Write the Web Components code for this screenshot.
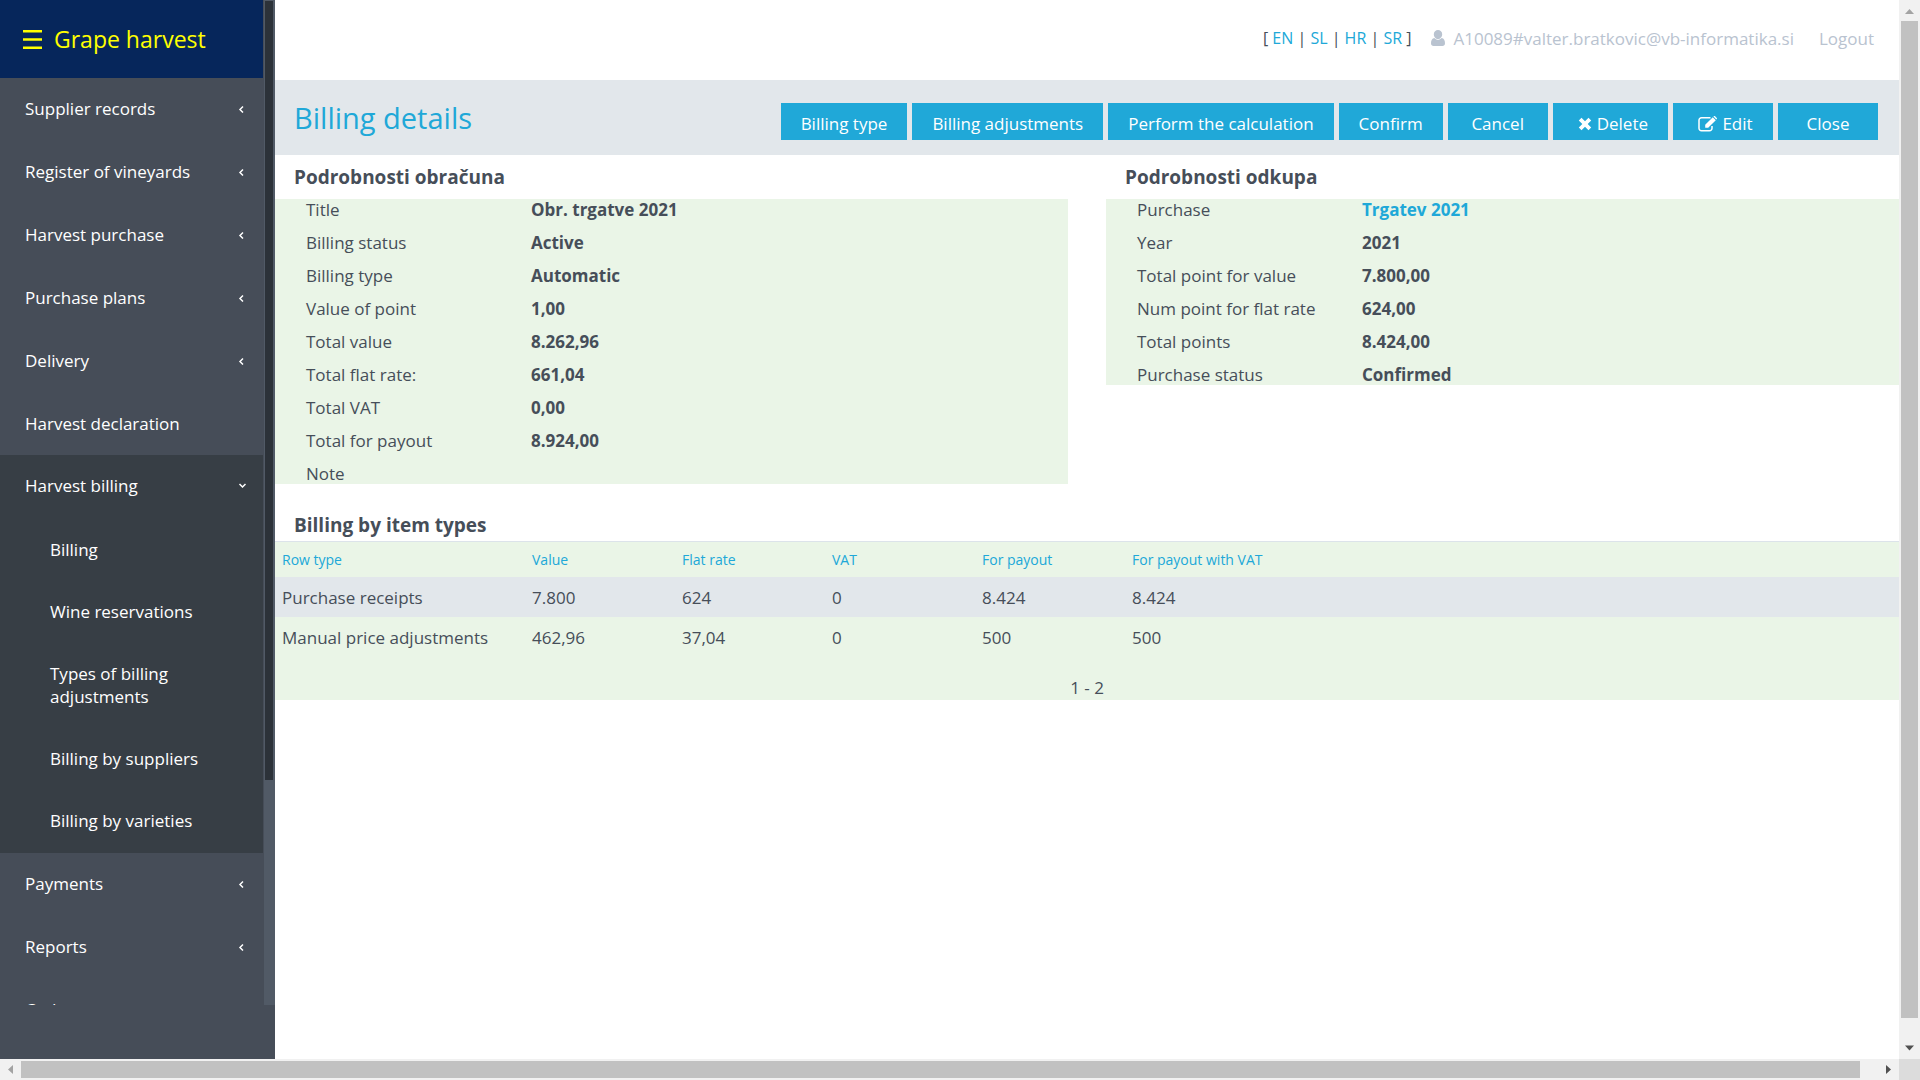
<!DOCTYPE html>
<html lang="en">
<head>
<meta charset="utf-8">
<title>Grape harvest – Billing details</title>
<style>
  html, body { margin: 0; height: 100%; }
  body {
    overflow: hidden;
    --blue: #20a8d8;
    --ink: #464e59;
    --green: #eaf5e7;
    --band: #e2e7eb;
    --muted: #b9c3d0;
    --side: #464d58;
    --side-open: #373e45;
    font-family: "Open Sans", "Segoe UI", "Noto Sans", sans-serif;
    font-size: 17px;
    line-height: 23px;
    color: var(--ink);
    background: #fff;
  }
</style>
</head>
<body>
<app-window>
  <app-sidebar slot="side" brand="Grape harvest">
    <nav-item parent>Supplier records</nav-item>
    <nav-item parent>Register of vineyards</nav-item>
    <nav-item parent>Harvest purchase</nav-item>
    <nav-item parent>Purchase plans</nav-item>
    <nav-item parent>Delivery</nav-item>
    <nav-item>Harvest declaration</nav-item>
    <nav-item parent open>Harvest billing
      <nav-item slot="sub" child>Billing</nav-item>
      <nav-item slot="sub" child>Wine reservations</nav-item>
      <nav-item slot="sub" child>Types of billing adjustments</nav-item>
      <nav-item slot="sub" child>Billing by suppliers</nav-item>
      <nav-item slot="sub" child>Billing by varieties</nav-item>
    </nav-item>
    <nav-item parent>Payments</nav-item>
    <nav-item parent>Reports</nav-item>
    <nav-item parent>Codes</nav-item>
  </app-sidebar>
  <user-bar user="A10089#valter.bratkovic@vb-informatika.si"></user-bar>
  <title-bar heading="Billing details">
    <action-button>Billing type</action-button>
    <action-button>Billing adjustments</action-button>
    <action-button>Perform the calculation</action-button>
    <action-button>Confirm</action-button>
    <action-button>Cancel</action-button>
    <action-button icon="times">Delete</action-button>
    <action-button icon="edit">Edit</action-button>
    <action-button>Close</action-button>
  </title-bar>
  <panel-row>
    <detail-panel heading="Podrobnosti obračuna">
      <detail-line label="Title">Obr. trgatve 2021</detail-line>
      <detail-line label="Billing status">Active</detail-line>
      <detail-line label="Billing type">Automatic</detail-line>
      <detail-line label="Value of point">1,00</detail-line>
      <detail-line label="Total value">8.262,96</detail-line>
      <detail-line label="Total flat rate:">661,04</detail-line>
      <detail-line label="Total VAT">0,00</detail-line>
      <detail-line label="Total for payout">8.924,00</detail-line>
      <detail-line label="Note"></detail-line>
    </detail-panel>
    <detail-panel heading="Podrobnosti odkupa">
      <detail-line label="Purchase" link>Trgatev 2021</detail-line>
      <detail-line label="Year">2021</detail-line>
      <detail-line label="Total point for value">7.800,00</detail-line>
      <detail-line label="Num point for flat rate">624,00</detail-line>
      <detail-line label="Total points">8.424,00</detail-line>
      <detail-line label="Purchase status">Confirmed</detail-line>
    </detail-panel>
  </panel-row>
  <billing-table heading="Billing by item types"></billing-table>
</app-window>

<script>
const make = (name, html, setup) => {
  const t = document.createElement('template');
  t.innerHTML = html;
  customElements.define(name, class extends HTMLElement {
    constructor() {
      super();
      this.attachShadow({ mode: 'open' }).append(t.content.cloneNode(true));
    }
    connectedCallback() {
      for (const el of this.shadowRoot.querySelectorAll('[data-attr]'))
        el.textContent = this.getAttribute(el.dataset.attr);
      if (setup) setup(this, this.shadowRoot);
    }
  });
};

/* Page frame with its two scroll bars */
make('app-window', `
<style>
  :host { display: grid; grid-template: minmax(0,1fr) 21px / minmax(0,1fr) 21px; height: 100vh; }
  .page { display: flex; min-width: 0; }
  main { flex: 1; min-width: 0; }
  .v, .h { display: flex; align-items: center; background: #f1f1f1; }
  .v { flex-direction: column; }
  .v i { width: 17px; flex: 1; background: #c1c1c1; }
  .h i { height: 17px; flex: 1; background: #c1c1c1; }
  .v svg, .h svg { width: 21px; height: 21px; flex: none; }
  .v .gap { height: 20px; }
  .h .gap { width: 18px; }
  .corner { background: #dcdcdc; }
</style>
<div class="page"><slot name="side"></slot><main><slot></slot></main></div>
<div class="v"><svg viewBox="0 0 21 21"><path d="M6 14l4.500-5 4.500 5z" fill="#a3a3a3"/></svg><i></i><span class="gap"></span><svg viewBox="0 0 21 21"><path d="M6 7.500l4.500 5 4.500-5z" fill="#505050"/></svg></div>
<div class="h"><svg viewBox="0 0 21 21"><path d="M13 6l-5 4.500 5 4.500z" fill="#a3a3a3"/></svg><i></i><span class="gap"></span><svg viewBox="0 0 21 21"><path d="M8 6l5 4.500-5 4.500z" fill="#505050"/></svg></div>
<div class="corner"></div>`);

make('app-sidebar', `
<style>
  :host { display: flex; flex-direction: column; width: 275px; flex: none; padding-bottom: 54px; box-sizing: border-box; background: var(--side); color: #fff; }
  .scroll { flex: 1; min-height: 0; display: flex; }
  .list { flex: 1; min-width: 0; overflow: hidden; }
  header { height: 78px; box-sizing: border-box; padding-left: 23px; display: flex; align-items: center; gap: 12px; background: #06265b; color: #ff0; font-size: 23px; }
  header button { all: unset; display: flex; }
  .bar { width: 8px; flex: none; border: 1px solid #515a66; border-right-width: 2px; margin: 0 0 0 1px; background: #515a66; }
  .bar i { display: block; height: 779px; background: #2c3239; }
</style>
<div class="scroll">
  <div class="list">
    <header><button aria-label="Menu"><svg width="19" height="19" viewBox="0 0 19 19" fill="#ff0"><path d="M0 0h19v2.600H0zM0 8.200h19v2.600H0zM0 16.400h19v2.600H0z"/></svg></button><span data-attr="brand"></span></header>
    <nav><slot></slot></nav>
  </div>
  <div class="bar"><i></i></div>
</div>`);

make('nav-item', `
<style>
  :host { display: block; }
  :host([open]) { background: var(--side-open); padding-bottom: 2px; }
  a { display: flex; align-items: center; justify-content: space-between; padding: 19px 18px 20px 25px; color: #fff; text-decoration: none; }
  :host([parent]) a { padding-bottom: 21px; }
  :host([child]) a { padding: 20px 60px 19px 50px; }
  svg { display: none; flex: none; }
  :host([parent]) svg { display: block; }
  :host([open]) svg { transform: rotate(-90deg); }
</style>
<a href="#"><span><slot></slot></span><svg width="7" height="9" viewBox="0 0 7 9" fill="none" stroke="#fff" stroke-width="1.500"><path d="M5 2.500l-3 3 3 3"/></svg></a>
<slot name="sub"></slot>`);

make('user-bar', `
<style>
  :host { display: flex; justify-content: flex-end; align-items: center; height: 80px; box-sizing: border-box; padding: 0 25px 4px 0; }
  a { color: var(--blue); text-decoration: none; }
  .langs { font-size: 16px; }
  .user, .out { color: var(--muted); }
  .user { display: flex; align-items: center; gap: 8px; margin: 0 25px 0 20px; }
</style>
<span class="langs">[ <a href="#">EN</a> | <a href="#">SL</a> | <a href="#">HR</a> | <a href="#">SR</a> ]</span>
<span class="user"><svg width="14" height="16" viewBox="0 0 14 16" fill="#b9c3d0"><path d="M7 0a4.200 4.200 0 0 1 4.200 4.200C11.200 6.800 9.300 9 7 9S2.800 6.800 2.800 4.200A4.200 4.200 0 0 1 7 0zM3.400 8c1 1.200 2.200 1.800 3.600 1.800S9.600 9.200 10.600 8C13 8.200 14 10.600 14 13.200 14 15 13 16 11.400 16H2.600C1 16 0 15 0 13.200 0 10.600 1 8.200 3.400 8z"/></svg><span data-attr="user"></span></span>
<a class="out" href="#">Logout</a>`);

make('title-bar', `
<style>
  :host { display: flex; justify-content: space-between; align-items: center; height: 75px; box-sizing: border-box; padding: 0 21px 0 19px; background: var(--band); }
  h1 { margin: 0; font-size: 29px; line-height: 40px; font-weight: 400; color: var(--blue); }
  .actions { display: flex; gap: 5px; padding-top: 8px; }
</style>
<h1 data-attr="heading"></h1><div class="actions"><slot></slot></div>`);

const icons = {
  times: '<svg width="14" height="14" viewBox="0 0 14 14"><path fill="#fff" d="M3.500.8L7 4.300 10.500.8 13.200 3.500 9.700 7l3.500 3.500-2.700 2.700L7 9.700l-3.500 3.500L.8 10.500 4.300 7 .8 3.500z"/></svg>',
  edit: '<svg width="19" height="16" viewBox="0 0 19 16"><path fill="none" stroke="#fff" stroke-width="1.500" d="M12.500 1.800H3.500A2.500 2.500 0 0 0 1 4.300v7.900a2.500 2.500 0 0 0 2.500 2.500h8a2.500 2.500 0 0 0 2.500-2.500V10"/><path fill="#fff" d="M14.800 1.200l3 3-7.600 7.600H7.200v-3zM15.400.6l.7-.5q.5-.3 1 .1l1.700 1.700q.4.500 0 1l-.5.700z"/></svg>'
};
make('action-button', `
<style>
  :host { display: block; }
  button { font: inherit; display: flex; align-items: center; justify-content: center; gap: 5px; min-width: 100px; height: 37px; padding: 4px 20px 0; border: 0; border-radius: 0; background: var(--blue); color: #fff; white-space: nowrap; }
  :host([icon]) button { padding-left: 25px; }
</style>
<button type="button"><slot></slot></button>`, (host, root) => {
  const icon = icons[host.getAttribute('icon')];
  if (icon) root.querySelector('button').insertAdjacentHTML('afterbegin', icon);
});

make('panel-row', `
<style>:host { display: grid; grid-template-columns: 1fr 1fr; gap: 38px; align-items: start; }</style>
<slot></slot>`);

make('detail-panel', `
<style>
  :host { display: block; }
  h2 { margin: 0; padding: 8px 19px; font-size: 19px; line-height: 28px; font-weight: 700; }
  .body { display: flex; flex-direction: column; gap: 12px; background: var(--green); }
</style>
<h2 data-attr="heading"></h2><div class="body"><slot></slot></div>`);

make('detail-line', `
<style>
  :host { display: flex; padding-left: 31px; line-height: 21px; }
  .label { width: 225px; }
  .value { font-weight: 700; }
  a { color: var(--blue); text-decoration: none; }
</style>
<span class="label" data-attr="label"></span><span class="value"><slot></slot></span>`, (host, root) => {
  if (host.hasAttribute('link')) root.querySelector('.value').innerHTML = '<a href="#"><slot></slot></a>';
});

make('billing-table', `
<style>
  :host { display: block; margin-top: 21px; }
  h2 { margin: 0; padding: 6px 19px 2px; font-size: 19px; line-height: 28px; font-weight: 700; }
  .box { background: var(--green); border-top: 1px solid #dce3ea; padding-bottom: 1px; }
  table { width: 100%; table-layout: fixed; border-collapse: collapse; }
  col.first { width: 250px; } col.num { width: 150px; }
  th, td { padding: 0 7px; text-align: left; font-weight: 400; }
  th { height: 35px; font-size: 14px; line-height: 20px; }
  td { height: 40px; }
  th a { color: var(--blue); text-decoration: none; white-space: nowrap; }
  tbody tr:nth-child(odd) { background: #e2e7eb; }
  .pager { text-align: center; padding-top: 19px; line-height: 23px; }
</style>
<h2 data-attr="heading"></h2>
<div class="box">
<table>
  <colgroup><col class="first"><col class="num"><col class="num"><col class="num"><col class="num"><col></colgroup>
  <thead><tr><th><a href="#">Row type</a></th><th><a href="#">Value</a></th><th><a href="#">Flat rate</a></th><th><a href="#">VAT</a></th><th><a href="#">For payout</a></th><th><a href="#">For payout with VAT</a></th></tr></thead>
  <tbody>
    <tr><td>Purchase receipts</td><td>7.800</td><td>624</td><td>0</td><td>8.424</td><td>8.424</td></tr>
    <tr><td>Manual price adjustments</td><td>462,96</td><td>37,04</td><td>0</td><td>500</td><td>500</td></tr>
  </tbody>
</table>
<div class="pager">1 - 2</div>
</div>`);
</script>
</body>
</html>
